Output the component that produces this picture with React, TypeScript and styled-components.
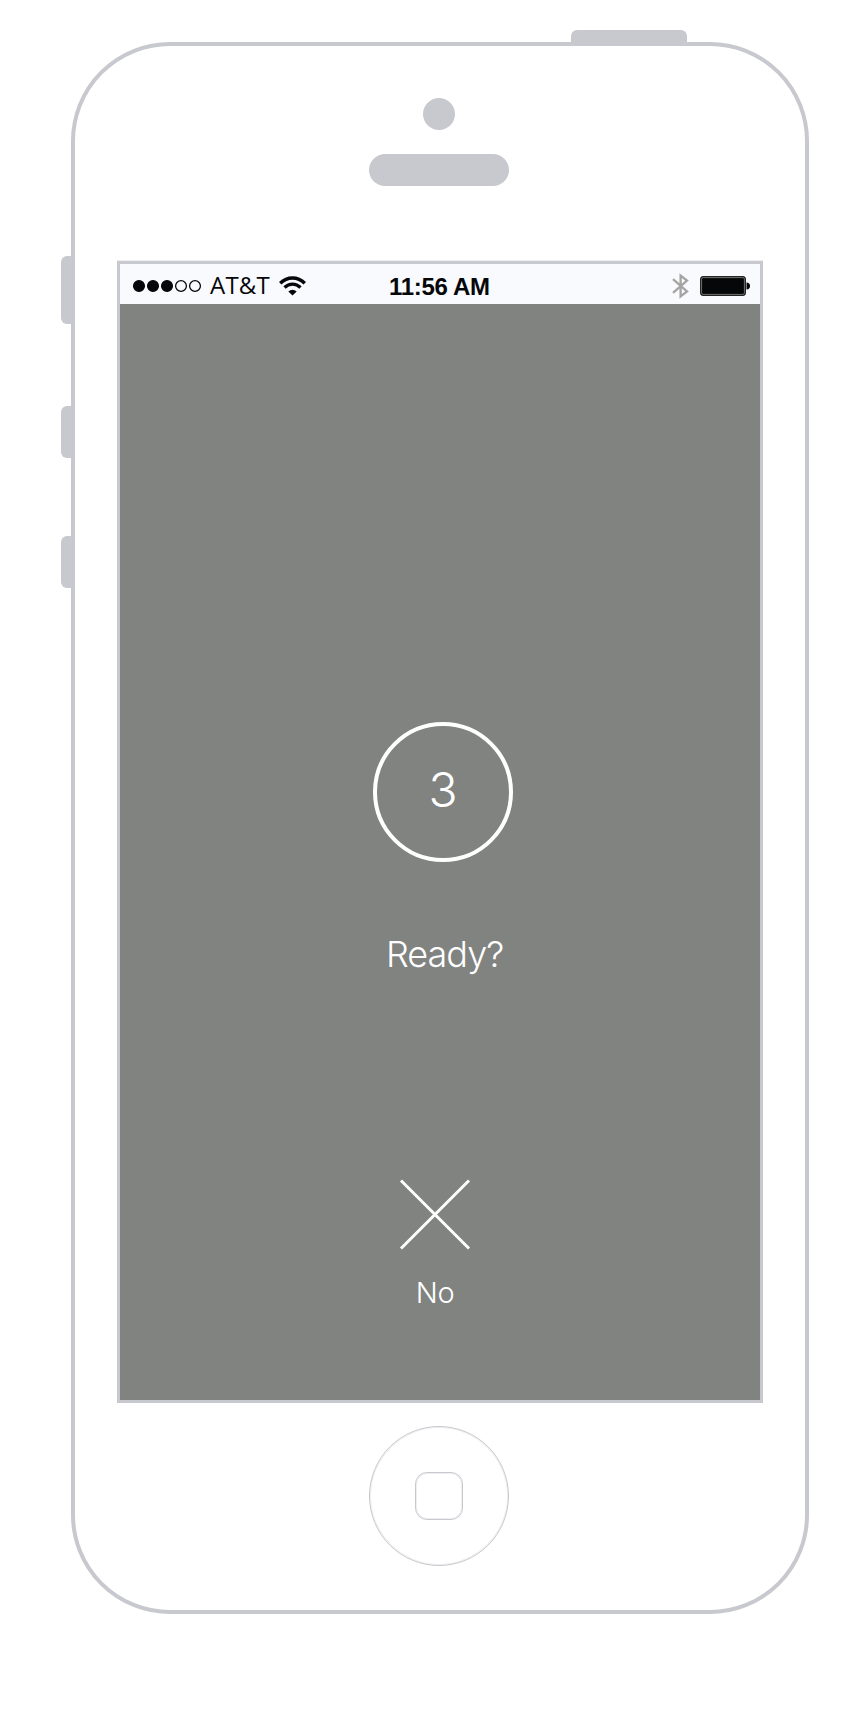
import React from "react";
import styled, { createGlobalStyle } from "styled-components";

const shell = "#c8c9ce";
const ink = "#050709";

const GlobalStyle = createGlobalStyle`
  * { box-sizing: border-box; }
  body { margin: 0; background: #fff; }
`;

const Page = styled.main`
  display: grid;
  grid-template-columns: 10px 738px;
  grid-template-rows: 12px 1572px;
  width: 859px;
  height: 1716px;
  padding: 30px 0 0 61px;
  background: #fff;
`;

const TopRail = styled.div`
  grid-column: 2;
  padding-left: 500px;
`;

const PowerButton = styled.div`
  width: 116px;
  height: 12px;
  border-radius: 6px 6px 0 0;
  background: ${shell};
`;

const SideRail = styled.div`
  grid-column: 1;
  padding-top: 214px;
`;

const SideButton = styled.div<{ $height: number; $gap: number }>`
  height: ${(p) => p.$height}px;
  margin-bottom: ${(p) => p.$gap}px;
  border-radius: 6px 0 0 6px;
  background: ${shell};
`;

const Phone = styled.div`
  display: flex;
  flex-direction: column;
  align-items: flex-start;
  padding: 52px 42px 0;
  border: 4px solid ${shell};
  border-radius: 99px;
`;

const Camera = styled.div`
  width: 32px;
  height: 32px;
  margin-left: 306px;
  border-radius: 50%;
  background: ${shell};
`;

const Speaker = styled.div`
  width: 140px;
  height: 32px;
  margin: 24px 0 75px 252px;
  border-radius: 16px;
  background: ${shell};
`;

const Screen = styled.section`
  display: flex;
  flex-direction: column;
  width: 646px;
  height: 1142px;
  border: 3px solid ${shell};
  background: #818381;
  box-shadow: 0 -1px 0 #eeeef0;
`;

const StatusBar = styled.header`
  display: grid;
  grid-template-columns: 257px 1fr 94px;
  align-items: center;
  height: 40px;
  flex: none;
  padding: 3px 0 0 12px;
  background: #f9fafd;
  color: ${ink};
`;

const StatusGroup = styled.div`
  display: flex;
  align-items: center;
  height: 37px;
`;

const SignalDots = styled.div`
  display: flex;
`;

const Carrier = styled.span`
  width: 62px;
  margin: 0 7px 0 8px;
  padding-bottom: 2px;
  font: 400 24px/36px "Open Sans", sans-serif;
  letter-spacing: 0.2px;
  white-space: nowrap;
`;

const Clock = styled.time`
  padding-top: 3px;
  font: 700 24px/36px "Liberation Sans", Arial, sans-serif;
  letter-spacing: -0.3px;
  white-space: nowrap;
`;

const Countdown = styled.div`
  display: flex;
  align-items: center;
  justify-content: center;
  width: 140px;
  height: 140px;
  margin: 418px 0 0 253px;
  padding-bottom: 5px;
  border: 4px solid #fff;
  border-radius: 50%;
`;

const Label = styled.span<{ $size: number; $spacing?: number }>`
  color: #fff;
  font-family: Inter, "Liberation Sans", sans-serif;
  font-weight: 300;
  font-size: ${(p) => p.$size}px;
  line-height: 1;
  letter-spacing: ${(p) => p.$spacing ?? 0}px;
  white-space: nowrap;
`;

const Prompt = styled.div`
  display: flex;
  height: 36px;
  margin: 74px 0 0 266px;
`;

const Decline = styled.button`
  display: flex;
  flex-direction: column;
  align-items: center;
  gap: 28px;
  width: 72px;
  margin: 206px 0 0 279px;
  padding: 0;
  border: 0;
  background: none;
`;

const HomeButton = styled.div`
  display: flex;
  align-items: center;
  justify-content: center;
  width: 140px;
  height: 140px;
  margin: 23px 0 0 252px;
  border: 1px solid ${shell};
  border-radius: 50%;
  box-shadow: inset 0 0 0 1px #c8c9ce50;
`;

const HomeSquare = styled.div`
  width: 48px;
  height: 48px;
  border: 1px solid ${shell};
  border-radius: 12px;
  box-shadow: inset 0 0 0 1px #c8c9ce50;
`;

const SignalDot = ({ on }: { on: boolean }) => (
  <svg width="14" height="14" viewBox="0 0 14 14">
    <circle cx="7" cy="7" r="5.400" fill={on ? ink : "none"} stroke={ink} strokeWidth="1.300" />
  </svg>
);

const Wifi = () => (
  <svg width="27" height="20" viewBox="0 0 27 20" fill="none" stroke={ink}>
    <path d="M1.200 7.300C8.400 0.200 18.600 0.200 25.800 7.300" strokeWidth="3.500" />
    <path d="M5.500 11.500C10.200 7 16.800 7 21.500 11.500" strokeWidth="3.300" />
    <path d="M9.300 15.600Q13.500 11.800 17.700 15.600L13.500 19.500Z" fill={ink} stroke="none" />
  </svg>
);

const Bluetooth = () => (
  <svg width="17" height="26" viewBox="0 0 17 26" fill="none" stroke="#a5a4a3" strokeWidth="2.300">
    <path d="M1 6.200L15 18.500L8.600 23.500V2.500L15 7.500L1 19.800" />
  </svg>
);

const Battery = () => (
  <svg width="50" height="20" viewBox="0 0 50 20">
    <rect x="0.500" y="0.500" width="45" height="19" rx="2.500" fill={ink} stroke="#242222" />
    <rect x="1.600" y="1.600" width="42.800" height="16.800" rx="1.500" fill="none" stroke="#827d7a" strokeWidth="0.900" />
    <path d="M46.500 6.500Q50 6.800 50 10T46.500 13.500Z" fill={ink} />
  </svg>
);

const Cross = () => (
  <svg width="72" height="72" viewBox="0 0 72 72" stroke="#fff" strokeWidth="3">
    <path d="M2 2.500L70 70.500M70 2.500L2 70.500" />
  </svg>
);

const BarIcon = styled.span<{ $gap?: number }>`
  display: flex;
  margin-left: ${(p) => p.$gap ?? 0}px;
`;

export default function App() {
  return (
    <>
      <GlobalStyle />
      <Page>
        <TopRail>
          <PowerButton />
        </TopRail>
        <SideRail>
          <SideButton $height={68} $gap={82} />
          <SideButton $height={52} $gap={78} />
          <SideButton $height={52} $gap={0} />
        </SideRail>
        <Phone>
          <Camera />
          <Speaker />
          <Screen>
            <StatusBar>
              <StatusGroup>
                <SignalDots>
                  {[true, true, true, false, false].map((on, i) => (
                    <SignalDot key={i} on={on} />
                  ))}
                </SignalDots>
                <Carrier>AT&amp;T</Carrier>
                <BarIcon><Wifi /></BarIcon>
              </StatusGroup>
              <StatusGroup>
                <Clock>11:56 AM</Clock>
              </StatusGroup>
              <StatusGroup>
                <BarIcon $gap={6}><Bluetooth /></BarIcon>
                <BarIcon $gap={11}><Battery /></BarIcon>
              </StatusGroup>
            </StatusBar>
            <Countdown>
              <Label $size={48}>3</Label>
            </Countdown>
            <Prompt>
              <Label $size={36} $spacing={-1}>Ready?</Label>
            </Prompt>
            <Decline>
              <Cross />
              <Label $size={29} $spacing={-0.3}>No</Label>
            </Decline>
          </Screen>
          <HomeButton>
            <HomeSquare />
          </HomeButton>
        </Phone>
      </Page>
    </>
  );
}
